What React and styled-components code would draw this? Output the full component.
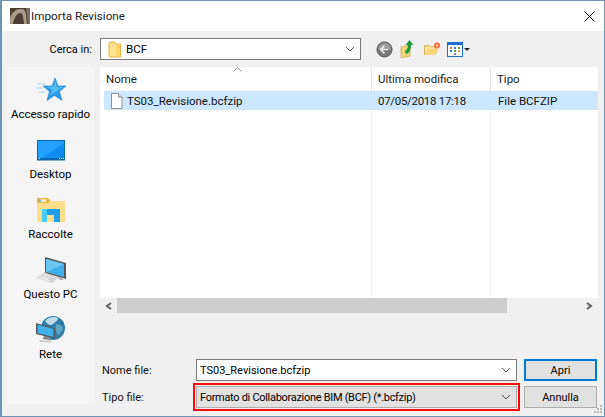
import React from "react";
import styled, { createGlobalStyle } from "styled-components";

const Global = createGlobalStyle`
  html, body { margin: 0; padding: 0; background: #fff; }
  * { box-sizing: border-box; }
`;
const Win = styled.div`
  width: 605px; height: 417px; border: 1px solid #6f93b3; border-left-width: 2px;
  background: #f0f0f0; display: flex; flex-direction: column; overflow: hidden;
  font: 11.5px Roboto, "Liberation Sans", Arial, sans-serif; color: #000; position: relative;
`;
const TitleBar = styled.div`
  height: 30px; flex: none; background: #fff; display: flex; align-items: center; padding: 0 0 0 8px; gap: 1px;
`;
const TitleText = styled.span`flex: 1; font-size: 11.7px; color: #222;`;
const CloseBtn = styled.div`width: 30px; height: 30px; display: flex; align-items: center; justify-content: center;`;
const Body = styled.div`flex: 1; display: flex; flex-direction: column; padding: 7px 6px 0 5px; min-height: 0;`;
const LookRow = styled.div`display: flex; align-items: center; height: 22px; flex: none;`;
const LookLabel = styled.label`width: 93px; text-align: right; padding-right: 8px; font-size: 11px;`;
const Combo = styled.div`
  display: flex; align-items: center; border: 1px solid ${p => p.$border || "#7a7a7a"};
  background: ${p => p.$bg || "#fff"}; height: 22px; width: ${p => p.$w}px; flex: none;
  padding-left: ${p => p.$pl || 3}px; position: relative;
`;
const ComboText = styled.span`
  flex: 1; white-space: nowrap; padding-left: ${p => p.$pl || 0}px;
  font-size: ${p => p.$fs || 11.5}px; letter-spacing: ${p => p.$ls || 0}px;
`;
const Chevron = styled.svg`width: 10px; height: 6px; margin-right: 5px; flex: none;`;
const Tools = styled.div`display: flex; align-items: center; margin-left: 15px;`;
const Main = styled.div`flex: 1; display: flex; gap: 6px; margin-top: 7px; min-height: 0;`;
const Sidebar = styled.div`width: 87px; flex: none; background: #f5f5f5; display: flex; flex-direction: column; margin-bottom: 12px;`;
const Place = styled.div`height: 60px; display: flex; flex-direction: column; align-items: center; padding-top: 7px;`;
const PlaceIcon = styled.div`height: 32px; margin-bottom: 1px; display: flex; align-items: center; justify-content: center;`;
const Right = styled.div`flex: 1; display: flex; flex-direction: column; min-width: 0;`;
const List = styled.div`height: 292px; flex: none; position: relative; display: flex; flex-direction: column;`;
const Header = styled.div`display: flex; height: 24px; flex: none; align-items: center; position: relative; background: #fff;`;
const HeadCell = styled.div`width: ${p => p.$w}px; height: 100%; padding-left: ${p => p.$pl || 6}px; display: flex; align-items: center; border-right: ${p => p.$nb ? "none" : "1px solid #e5e5e5"}; color: #1a1a1a;`;
const Sort = styled.svg`position: absolute; left: 133px; top: 0; width: 9px; height: 5px;`;
const Rows = styled.div`height: 207px; flex: none; background: #fff; position: relative;`;
const FileRow = styled.div`display: flex; height: 19px; background: #cce8ff; align-items: center; margin-left: 4px;`;
const Cell = styled.div`
  width: ${p => p.$w}px; padding-left: ${p => p.$pl || 6}px; display: flex; align-items: center; gap: 4px;
  white-space: nowrap; color: #111; letter-spacing: ${p => p.$ls || 0}px;
`;
const ColLine = styled.div`position: absolute; left: ${p => p.$x}px; top: 19px; bottom: 0; width: 1px; background: #eaf0f6;`;
const HScroll = styled.div`height: 15px; flex: none; display: flex; align-items: stretch;`;
const ScrollBtn = styled.div`width: ${p => p.$w}px; flex: none; display: flex; align-items: center; justify-content: center;`;
const Thumb = styled.div`width: 390px; flex: none; background: #cdcdcd;`;
const Track = styled.div`flex: 1;`;
const Form = styled.div`display: grid; grid-template-columns: 96px 321px 73px; grid-template-rows: 22px 22px; row-gap: 5px; align-items: center;`;
const FormLabel = styled.label`padding-left: 2px; color: #111; font-size: 11px;`;
const Hilite = styled.div`grid-column: 2; width: 327px; height: 28px; margin: 0 0 0 -3px; border: 2px solid #f80a0a; padding: 1px; background: #f0f0f0;`;
const Btn = styled.button`
  width: 73px; height: 22px; padding: 0; margin: 0 0 0 7px; background: #e1e1e1; font: 11px Roboto, "Liberation Sans", Arial, sans-serif; color: #000;
  border: ${p => p.$def ? "2px solid #0078d7" : "1px solid #adadad"};
`;
const Grip = styled.svg`position: absolute; right: 1px; bottom: 1px; width: 12px; height: 12px;`;

const Chev = () => <Chevron viewBox="0 0 10 6"><path d="M1 1l4 4 4-4" fill="none" stroke="#555" strokeWidth="1"/></Chevron>;
const Arrow = ({ d }) => <svg width="7" height="8" viewBox="0 0 7 8"><path d={d} fill="none" stroke="#606060" strokeWidth="2"/></svg>;

const Star = () => (
  <svg width="32" height="26" viewBox="0 0 32 26">
    <path d="M3 7h8M1 11h7M4 15h6" stroke="#9fd2f5" strokeWidth="1"/>
    <path d="M20 1l3 8 8 0-6.500 5.500 2.500 9-7.500-5-7.500 5 2.500-9L8 9l9 0z" fill="#2a9be8" stroke="#1a86d8" strokeWidth=".6"/>
    <path d="M20 3l2 7 6 0-13 9 2-6-5-3 7-1z" fill="#55bdf5"/>
  </svg>
);
const Desktop = () => (
  <svg width="28" height="21" viewBox="0 0 28 21">
    <rect x=".5" y=".5" width="27" height="19.500" fill="#0f8cf0" stroke="#0a66b0"/>
    <path d="M1 1h26v2L4 19H1z" fill="#22a0fb"/>
    <rect x="1" y="18" width="26" height="2" fill="#0a66b0"/>
    <path d="M2 18.500h1M22 18.500h1M24 18.500h1M26 18.500h1" stroke="#fff"/>
  </svg>
);
const Library = () => (
  <svg width="28" height="24" viewBox="0 0 28 24">
    <path d="M0 1h12l2 2h14v21H0z" fill="#fbdf8c"/>
    <path d="M0 0h11l2 3-2 2H0z" fill="#e9b84a"/>
    <rect x="2" y="1.500" width="7" height="2" fill="#fff"/>
    <rect x="2" y="1.500" width="2" height="2" fill="#3fb4e8"/>
    <path d="M5 24V11h18v13h-6v-7h-7v7z" fill="#1fa0ec"/>
    <path d="M5 24V11h5v13z" fill="#45cdf5"/>
  </svg>
);
const Pc = () => (
  <svg width="32" height="27" viewBox="0 0 32 27">
    <path d="M10 0l21 6v16L10 16z" fill="#555"/>
    <path d="M11 2l18 5v13L11 15z" fill="#40b0ea"/>
    <path d="M11 2l18 5-18 8z" fill="#6cc8f2"/>
    <path d="M26 21l3 2-4 0-3-3z" fill="#aaa"/>
    <path d="M1 21l8-6 14 6-6 5z" fill="#d4d4d4"/>
    <path d="M3 21l6-4M6 23l6-5M9 24l6-5M5 20l10 4" stroke="#fff" strokeWidth=".7"/>
  </svg>
);
const Net = () => (
  <svg width="29" height="28" viewBox="0 0 29 28">
    <circle cx="17" cy="12" r="12" fill="#2f7da6"/>
    <path d="M9 5c3-4 9-5 13-3 0 3-3 4-5 6s-5 1-8-3z" fill="#bcdbe8"/>
    <path d="M20 8c3 0 6 1 7 4-1 3-3 6-5 7-2-3-3-7-2-11z" fill="#5ea6c6"/>
    <path d="M0 7l19 5.500v10L0 18z" fill="#555"/>
    <path d="M1.500 8.500l16 4.500v8l-16-4z" fill="#3fb0ea"/>
    <path d="M8 20l6 1.500.5 3-8-1.500z" fill="#8a8a8a"/>
    <path d="M3 24l12 1.500 1 1L4 25.500z" fill="#bbb"/>
  </svg>
);
const FolderSm = () => (
  <svg width="14" height="17" viewBox="0 0 14 17">
    <path d="M1 2.500C1 1.500 1.500 1 2.500 1H7v2h5.500v13H2.500C1.500 16 1 15.500 1 14.500z" fill="#ffe28f" stroke="#e5b544" strokeWidth="1"/>
    <path d="M8 4h4v11H8z" fill="#fbd566"/>
  </svg>
);
const AppIcon = () => (
  <svg width="20" height="16" viewBox="0 0 20 16">
    <rect width="20" height="16" fill="#4a3f33"/>
    <path d="M0 16V10C2 4 6 1 11 1s5 4 6 15h-3c-1-8-1-11-4-11S4 10 3 16z" fill="#a89c88"/>
    <path d="M16 0h4v16h-2z" fill="#7b6f60"/>
  </svg>
);
const FileIcon = () => (
  <svg width="13" height="16" viewBox="0 0 13 16">
    <path d="M1.500.5h7l3.500 3.500v11.500h-10.500z" fill="#fff" stroke="#8f8f8f"/>
    <path d="M8.500.5v3.500h3.500" fill="#eee" stroke="#8f8f8f"/>
  </svg>
);
const Back = () => (
  <svg width="17" height="17" viewBox="0 0 18 18">
    <circle cx="9" cy="9" r="8" fill="#777" stroke="#555"/>
    <path d="M2 9a7 7 0 0 1 14 0z" fill="#999"/>
    <path d="M9 5L5 9l4 4M5 9h8" fill="none" stroke="#eee" strokeWidth="1.800"/>
  </svg>
);
const Up = () => (
  <svg width="15" height="18" viewBox="0 0 15 18" style={{marginLeft: 7}}>
    <path d="M1 7l9-2v11l-9 2z" fill="#f5d67c" stroke="#d0a648" strokeWidth=".8"/>
    <path d="M5 11c2-1 3-3 3-6H5.500L9.500 0l4 5h-2.500c0 4-1 8-5 9z" fill="#1f9b3a"/>
  </svg>
);
const NewF = () => (
  <svg width="17" height="14" viewBox="0 0 17 14" style={{marginLeft: 9}}>
    <path d="M.5 3.500h5l1 1h5v8h-11z" fill="#fbe093" stroke="#d0a648" strokeWidth=".8"/>
    <path d="M1 13l3-6h11l-3.500 6z" fill="#f7d57a"/>
    <circle cx="13" cy="3.500" r="3" fill="#ef6a3a"/>
    <circle cx="13" cy="3.500" r="1.200" fill="#fbd9a0"/>
  </svg>
);
const ViewI = () => (
  <svg width="24" height="15" viewBox="0 0 24 15" style={{marginLeft: 6}}>
    <rect x=".5" y=".5" width="15" height="14" fill="#fff" stroke="#1f6fd0"/>
    <rect x="1" y="1" width="14" height="2" fill="#1f6fd0"/>
    <rect x="3" y="5" width="2" height="2" fill="#d07a30"/>
    <rect x="7" y="5" width="2" height="2" fill="#2f7fd0"/>
    <rect x="11" y="5" width="2" height="2" fill="#50a050"/>
    <rect x="3" y="8" width="2" height="2" fill="#2f7fd0"/>
    <rect x="7" y="8" width="2" height="2" fill="#50a050"/>
    <rect x="11" y="8" width="2" height="2" fill="#d0a030"/>
    <rect x="7" y="11" width="2" height="2" fill="#888"/>
    <path d="M17 6h6l-3 3z" fill="#222"/>
  </svg>
);

export default function App() {
  return (
    <Win>
      <Global />
      <TitleBar>
        <AppIcon />
        <TitleText>Importa Revisione</TitleText>
        <CloseBtn>
          <svg width="11" height="11" viewBox="0 0 11 11"><path d="M.5.500l10 10M10.500.500l-10 10" stroke="#111" fill="none"/></svg>
        </CloseBtn>
      </TitleBar>
      <Body>
        <LookRow>
          <LookLabel>Cerca in:</LookLabel>
          <Combo $w={261} $pl={7}>
            <FolderSm />
            <ComboText $pl={4}>BCF</ComboText>
            <Chev />
          </Combo>
          <Tools><Back /><Up /><NewF /><ViewI /></Tools>
        </LookRow>
        <Main>
          <Sidebar>
            <Place><PlaceIcon><Star /></PlaceIcon>Accesso rapido</Place>
            <Place><PlaceIcon><Desktop /></PlaceIcon>Desktop</Place>
            <Place><PlaceIcon><Library /></PlaceIcon>Raccolte</Place>
            <Place><PlaceIcon><Pc /></PlaceIcon>Questo PC</Place>
            <Place><PlaceIcon><Net /></PlaceIcon>Rete</Place>
          </Sidebar>
          <Right>
            <List>
              <Header>
                <Sort viewBox="0 0 9 5"><path d="M.5 4.500L4.500.500l4 4" fill="none" stroke="#888"/></Sort>
                <HeadCell $w={272}>Nome</HeadCell>
                <HeadCell $w={119}>Ultima modifica</HeadCell>
                <HeadCell $w={107} $nb>Tipo</HeadCell>
              </Header>
              <Rows>
                <FileRow>
                  <Cell $w={268} $pl={6}><FileIcon />TS03_Revisione.bcfzip</Cell>
                  <Cell $w={120} $ls={-0.3}>07/05/2018 17:18</Cell>
                  <Cell $w={106}>File BCFZIP</Cell>
                </FileRow>
                <ColLine $x={271} />
                <ColLine $x={390} />
              </Rows>
              <HScroll>
                <ScrollBtn $w={17}><Arrow d="M6 1L2 4l4 3" /></ScrollBtn>
                <Thumb />
                <Track />
                <ScrollBtn $w={17}><Arrow d="M1 1l4 3-4 3" /></ScrollBtn>
              </HScroll>
            </List>
            <Form>
              <FormLabel>Nome file:</FormLabel>
              <Combo $w={321} $pl={3}>
                <ComboText $fs={11}>TS03_Revisione.bcfzip</ComboText>
                <Chev />
              </Combo>
              <Btn $def>Apri</Btn>
              <FormLabel>Tipo file:</FormLabel>
              <Hilite>
                <Combo $w={321} $bg="#e1e1e1" $border="#adadad" $pl={3}>
                  <ComboText $fs={11} $ls={-0.3}>Formato di Collaborazione BIM (BCF) (*.bcfzip)</ComboText>
                  <Chev />
                </Combo>
              </Hilite>
              <Btn>Annulla</Btn>
            </Form>
          </Right>
        </Main>
      </Body>
      <Grip viewBox="0 0 12 12"><path d="M9 2h2v2H9zM6 5h2v2H6zM9 5h2v2H9zM3 8h2v2H3zM6 8h2v2H6zM9 8h2v2H9z" fill="#bbb"/></Grip>
    </Win>
  );
}
